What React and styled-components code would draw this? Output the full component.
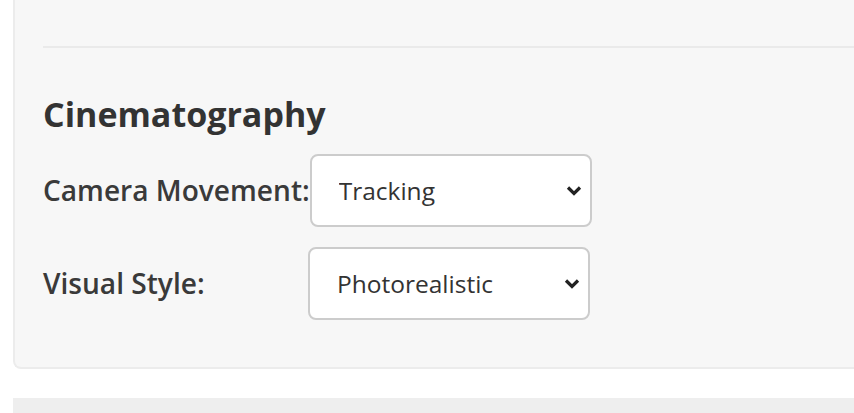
import React, { useState } from 'react';
import styled, { createGlobalStyle } from 'styled-components';

const GlobalStyle = createGlobalStyle`
  body {
    margin: 0;
    background: #ffffff;
    font-family: 'Open Sans', 'Noto Sans', sans-serif;
    color: #333333;
    overflow: hidden;
  }
`;

const Page = styled.div`
  padding: 0 0 0 13px;
  display: flex;
  flex-direction: column;
  gap: 29px;
`;

const Card = styled.section`
  background: ${p => (p.$muted ? '#eeeeee' : '#f7f7f7')};
  border: 2px solid ${p => (p.$muted ? '#eeeeee' : '#ececec')};
  border-top: none;
  border-right: none;
  border-radius: 0 0 0 8px;
  padding: 0 0 47px 28px;
  min-height: ${p => (p.$muted ? '40px' : 'auto')};
`;

const Divider = styled.hr`
  margin: 46px 0 0;
  border: none;
  border-top: 2px solid #eaeaea;
`;

const Heading = styled.h2`
  margin: 46px 0 19px;
  font-size: 34px;
  font-weight: 700;
  line-height: 1.2;
  color: #333333;
`;

const Rows = styled.div`
  display: flex;
  flex-direction: column;
  gap: 20px;
`;

const Row = styled.div`
  display: flex;
  align-items: center;
`;

const Label = styled.label`
  min-width: 265px;
  font-size: 28.1px;
  font-weight: 600;
  color: #3a3a3a;
  white-space: nowrap;
`;

const SelectWrap = styled.div`
  position: relative;
  width: 282px;
`;

const Select = styled.select`
  appearance: none;
  width: 100%;
  height: 73px;
  padding: 0 40px 0 27px;
  border: 2px solid #cccccc;
  border-radius: 8px;
  background: #ffffff;
  font-family: 'Open Sans', 'Noto Sans', sans-serif;
  font-size: 24.5px;
  color: #333333;
  outline: none;
`;

const Chevron = styled.svg`
  position: absolute;
  right: 10px;
  top: 50%;
  width: 16px;
  height: 11px;
  margin-top: -5px;
  pointer-events: none;
`;

const Field = ({ label, options, value, onChange }) => (
  <Row>
    <Label>{label}</Label>
    <SelectWrap>
      <Select value={value} onChange={e => onChange(e.target.value)}>
        {options.map(o => (
          <option key={o}>{o}</option>
        ))}
      </Select>
      <Chevron viewBox="0 0 16 11">
        <path d="M2 2.5 L8 8.5 L14 2.5" fill="none" stroke="#222" strokeWidth="3.2" />
      </Chevron>
    </SelectWrap>
  </Row>
);

export default function App() {
  const [movement, setMovement] = useState('Tracking');
  const [style, setStyle] = useState('Photorealistic');

  return (
    <>
      <GlobalStyle />
      <Page>
        <Card>
          <Divider />
          <Heading>Cinematography</Heading>
          <Rows>
            <Field
              label="Camera Movement:"
              options={['Static', 'Pan', 'Tracking', 'Dolly', 'Handheld']}
              value={movement}
              onChange={setMovement}
            />
            <Field
              label="Visual Style:"
              options={['Photorealistic', 'Cinematic', 'Animated', 'Noir']}
              value={style}
              onChange={setStyle}
            />
          </Rows>
        </Card>
        <Card $muted />
      </Page>
    </>
  );
}
